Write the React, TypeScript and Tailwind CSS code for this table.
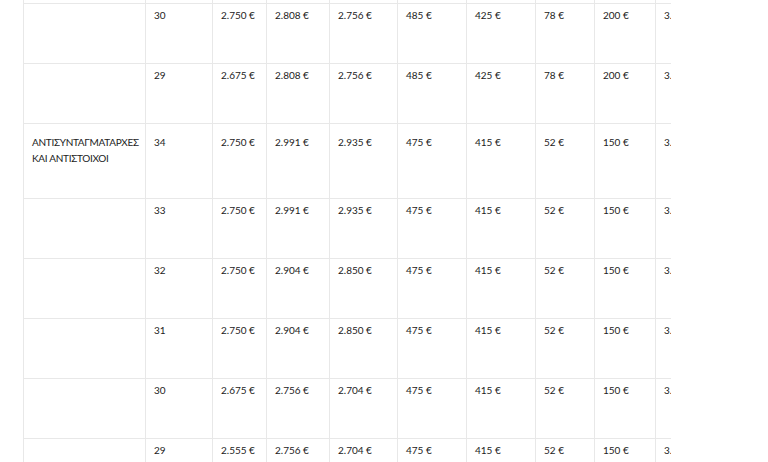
const rows: { rank: string; years: string; vals: string[] }[] = [
  { rank: "", years: "31", vals: ["2.750 €", "2.808 €", "2.756 €", "485 €", "425 €", "78 €", "200 €", "3.313 €"] },
  { rank: "", years: "30", vals: ["2.750 €", "2.808 €", "2.756 €", "485 €", "425 €", "78 €", "200 €", "3.313 €"] },
  { rank: "", years: "29", vals: ["2.675 €", "2.808 €", "2.756 €", "485 €", "425 €", "78 €", "200 €", "3.313 €"] },
  { rank: "ΑΝΤΙΣΥΝΤΑΓΜΑΤΑΡΧΕΣ ΚΑΙ ΑΝΤΙΣΤΟΙΧΟΙ", years: "34", vals: ["2.750 €", "2.991 €", "2.935 €", "475 €", "415 €", "52 €", "150 €", "3.349 €"] },
  { rank: "", years: "33", vals: ["2.750 €", "2.991 €", "2.935 €", "475 €", "415 €", "52 €", "150 €", "3.349 €"] },
  { rank: "", years: "32", vals: ["2.750 €", "2.904 €", "2.850 €", "475 €", "415 €", "52 €", "150 €", "3.266 €"] },
  { rank: "", years: "31", vals: ["2.750 €", "2.904 €", "2.850 €", "475 €", "415 €", "52 €", "150 €", "3.266 €"] },
  { rank: "", years: "30", vals: ["2.675 €", "2.756 €", "2.704 €", "475 €", "415 €", "52 €", "150 €", "3.124 €"] },
  { rank: "", years: "29", vals: ["2.555 €", "2.756 €", "2.704 €", "475 €", "415 €", "52 €", "150 €", "3.124 €"] },
];

// widths of each column, rank + years + 8 money columns
const widths = ["w-[122px]", "w-[67px]", "w-[54px]", "w-[63px]", "w-[68px]", "w-[69px]", "w-[69px]", "w-[59px]", "w-[61px]", "w-[70px]"];

export default function App() {
  return (
    <div className="h-[462px] w-[768px] overflow-hidden bg-white font-['Lato',sans-serif] text-[10px] leading-[16px] text-[#222]">
      <div className="ml-[23px] mt-[-57px] w-[648px] overflow-hidden">
        <table className="w-[702px] table-fixed border-collapse">
          <tbody>
            {rows.map((r, i) => (
              <tr key={i} className={r.rank ? "h-[75px]" : "h-[60px]"}>
                {[r.rank, r.years, ...r.vals].map((v, j) => (
                  <td
                    key={j}
                    className={`${widths[j]} border border-[#e8e8e8] px-[8px] align-top ${r.rank ? "pt-[10px]" : "pt-[3px]"} ${j === 0 ? "tracking-[-0.3px]" : ""}`}
                  >
                    {v}
                  </td>
                ))}
              </tr>
            ))}
          </tbody>
        </table>
      </div>
    </div>
  );
}
